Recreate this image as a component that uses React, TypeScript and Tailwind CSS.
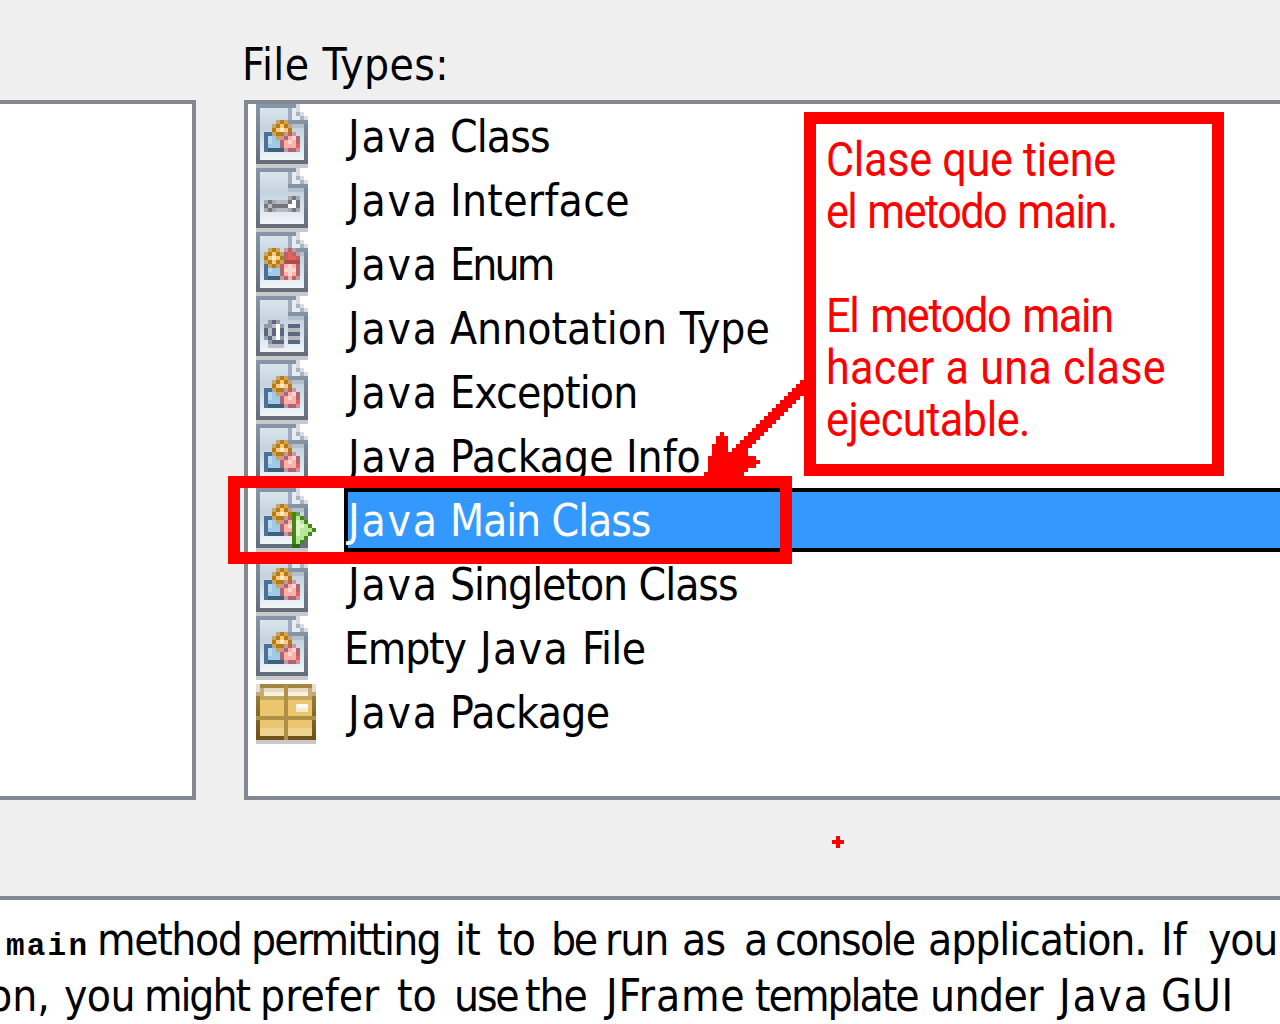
import type { ReactNode } from "react";

const PALETTE: Record<string, string> = {
  o: "#b87c0a", t: "#c8a468", l: "#f3cb85", L: "#fde9c4",
  B: "#4d7192", D: "#3f5f7c", b: "#9dc9ea", c: "#b9d9f0",
  r: "#b5646a", q: "#c79aa2", p: "#fbb1ad", P: "#fdd6d2", R: "#e8615d", M: "#b24a4a",
  g: "#73777b", h: "#a4a9ae", i: "#b4bac0", w: "#ffffff",
  n: "#5c6780", m: "#9199aa", k: "#bcc0c6",
  G: "#3f8a12", H: "#6aa544", e: "#b9e59b", f: "#def5cd", J: "#2f6e0c",
};

function Pixels({ rows, x = 0, y = 0 }: { rows: string[]; x?: number; y?: number }) {
  return (
    <>
      {rows.flatMap((row, j) =>
        row.split("").map((ch, i) =>
          PALETTE[ch] ? <rect key={`${i}-${j}`} x={x + i} y={y + j} width={1} height={1} fill={PALETTE[ch]} /> : null,
        ),
      )}
    </>
  );
}

const CLASS_ROWS = [
  "...tot...",
  "..tolot..",
  "..olLlo..",
  "BBtooqrq.",
  "BcbtqrpPr",
  "BcbbrpPpr",
  "BbbbrpppR",
  "BDDDDqrrq",
];
const INTERFACE_ROWS = ["......hgh", "hghiiigwg", "gkggggwwg", "hghiiihgh"];
const ENUM_ROWS = [
  ".tot.qrq.",
  "tolotrRrq",
  "olLlorRRr",
  "tolotMMMM",
  "BtotrpPpr",
  "BcbbrPPPr",
  "BbbbrpPpr",
  "BDDDqrprq",
];
const ANNOTATION_ROWS = [
  ".mnm.....",
  "mmkwm.nnn",
  "nknwn.iii",
  "nknwn.nnn",
  "mnkwm.iii",
  ".mnnn.nnn",
  ".kkkk....",
];
const RUN_ROWS = ["GH....", "GeG...", "GfeG..", "GffeG.", "GfeeeG", "GfeeG.", "GeeG..", "GeG...", "JJ...."];

type Kind = "class" | "interface" | "enum" | "annotation" | "main" | "package";

function DocumentIcon({ kind }: { kind: Kind }) {
  return (
    <svg className="block h-16 w-[60px]" viewBox="0 0 15 16" shapeRendering="crispEdges">
      <defs>
        <linearGradient id="docEdge" x1="0" y1="0" x2="0" y2="1">
          <stop offset="0" stopColor="#8696a8" />
          <stop offset="1" stopColor="#636e7a" />
        </linearGradient>
        <linearGradient id="docFill" x1="0" y1="0" x2="0" y2="1">
          <stop offset="0" stopColor="#d9e4ed" />
          <stop offset="0.4" stopColor="#c5d3e0" />
          <stop offset="1" stopColor="#f1f5f9" />
        </linearGradient>
      </defs>
      <rect width="13" height="15" fill="url(#docEdge)" />
      <rect x="1" y="1" width="11" height="13" fill="url(#docFill)" />
      <rect x="0" y="15" width="13" height="1" fill="#c9c8ca" />
      <path d="M10 0h3v4h-3z" fill="#ffffff" />
      <path d="M10 0h1v1h-1zM10 1h1v1h-1zM11 2h1v1h-1zM12 3h1v1h-1z" fill="#d8dce2" />
      <path d="M9 1h1v3h-1zM10 3h1v1h-1z" fill="#e6ecf3" />
      <path d="M8 1h1v3h-1z" fill="#9fadbc" />
      <path d="M10 2h1v1h-1zM11 3h1v1h-1z" fill="#aab5c2" />
      <path d="M8 4h5v1h-5z" fill="#8494a5" />
      <path d="M8 5h4v1h-4z" fill="#b3bfcc" />
      <path d="M13 5h1v1h-1z" fill="#f7f7f8" />
      {(kind === "class" || kind === "main") && <Pixels rows={CLASS_ROWS} x={2} y={4} />}
      {kind === "interface" && <Pixels rows={INTERFACE_ROWS} x={2} y={7} />}
      {kind === "enum" && <Pixels rows={ENUM_ROWS} x={2} y={4} />}
      {kind === "annotation" && <Pixels rows={ANNOTATION_ROWS} x={2} y={6} />}
      {kind === "main" && <Pixels rows={RUN_ROWS} x={9} y={6} />}
    </svg>
  );
}

function PackageIcon() {
  return (
    <svg className="block h-16 w-[60px]" viewBox="0 0 15 16" shapeRendering="crispEdges">
      <defs>
        <linearGradient id="boxEdge" x1="0" y1="0" x2="0" y2="1">
          <stop offset="0" stopColor="#a48743" />
          <stop offset="1" stopColor="#6b5119" />
        </linearGradient>
      </defs>
      <rect x="0" y="1" width="15" height="14" fill="url(#boxEdge)" />
      <path d="M0 1h1v2h-1zM14 1h1v2h-1z" fill="#e6dfd0" />
      <path d="M0 3h1v1h-1zM14 3h1v1h-1z" fill="#bba982" />
      <path d="M1 2h13v2h-13z" fill="#c5ad78" />
      <path d="M2 2h5v1h-5zM8 2h5v1h-5z" fill="#e7d9bd" />
      <path d="M2 3h5v1h-5zM8 3h5v1h-5z" fill="#faf1de" />
      <path d="M1 4h13v1h-13z" fill="#c4a75f" />
      <path d="M1 5h13v4h-13z" fill="#ebc66d" />
      <path d="M0 9h15v1h-15z" fill="#ad9144" />
      <path d="M1 10h13v2h-13z" fill="#ebc672" />
      <path d="M1 12h13v2h-13z" fill="#efd391" />
      <path d="M7 1h1v14h-1z" fill="#ae9146" />
      <path d="M10 6h3v1h-3z" fill="#fdf8f0" />
      <path d="M10 7h3v1h-3z" fill="#f5ead0" />
      <path d="M0 15h15v1h-15z" fill="#cac8cb" />
    </svg>
  );
}

type Word = [text: string, style: string];

const JAVA = "inline-block w-[102px] tracking-[1.8px]";

const ITEMS: { kind: Kind; words: Word[] }[] = [
  { kind: "class", words: [["Java ", JAVA], ["Class", "tracking-[-0.9px]"]] },
  { kind: "interface", words: [["Java ", JAVA], ["Interface", "tracking-[0.3px]"]] },
  { kind: "enum", words: [["Java ", JAVA], ["Enum", "tracking-[-2.8px]"]] },
  { kind: "annotation", words: [["Java ", JAVA], ["Annotation Type", "tracking-[0px]"]] },
  { kind: "class", words: [["Java ", JAVA], ["Exception", "tracking-[-0.8px]"]] },
  { kind: "class", words: [["Java ", JAVA], ["Package Info", "tracking-[-0.05px]"]] },
  { kind: "main", words: [["Java ", JAVA], ["Main Class", "tracking-[-1.1px]"]] },
  { kind: "class", words: [["Java ", JAVA], ["Singleton Class", "tracking-[-1.05px]"]] },
  {
    kind: "class",
    words: [
      ["Empty ", "-ml-1 inline-block w-[136px] tracking-[-1.2px]"],
      ["Java ", "inline-block w-[102px] tracking-[1.4px]"],
      ["File", "tracking-[-0.6px]"],
    ],
  },
  { kind: "package", words: [["Java ", JAVA], ["Package", "tracking-[-0.6px]"]] },
];

const DESCRIPTION_FIRST: Word[] = [
  ["method ", "w-[154px] tracking-[-1.4px]"],
  ["permitting ", "w-[204px] tracking-[-1.8px]"],
  ["it ", "w-[42px] tracking-[-0.8px]"],
  ["to ", "w-[54px] tracking-[-0.8px]"],
  ["be ", "w-[54px] tracking-[-2.4px]"],
  ["run ", "w-[77px] tracking-[-1px]"],
  ["as ", "w-[62px] tracking-[-0.8px]"],
  ["a ", "w-[31px]"],
  ["console ", "w-[153px] tracking-[-1.7px]"],
  ["application. ", "w-[233px] tracking-[-1.1px]"],
  ["If ", "w-[47px]"],
  ["you", "tracking-[-1.2px]"],
];

const DESCRIPTION_SECOND: Word[] = [
  ["on, ", "w-[76px]"],
  ["you ", "w-[80px] tracking-[-0.6px]"],
  ["might ", "w-[116px] tracking-[-2.1px]"],
  ["prefer ", "w-[137px]"],
  ["to ", "w-[57px]"],
  ["use ", "w-[71px] tracking-[-2.2px]"],
  ["the ", "w-[81px] tracking-[-1px]"],
  ["JFrame ", "w-[149px] tracking-[0.8px]"],
  ["template ", "w-[175px] tracking-[-2px]"],
  ["under ", "w-[129px] tracking-[-0.6px]"],
  ["Java ", "w-[102px] tracking-[1.8px]"],
  ["GUI", "tracking-[0.4px]"],
];

function Words({ words }: { words: Word[] }) {
  return (
    <>
      {words.map(([text, style], i) => (
        <span key={i} className={`shrink-0 ${style}`}>
          {text}
        </span>
      ))}
    </>
  );
}

function FileTypeRow({ kind, words }: { kind: Kind; words: Word[] }) {
  return (
    <li className="flex h-16">
      <div className="w-24 shrink-0 pl-2">{kind === "package" ? <PackageIcon /> : <DocumentIcon kind={kind} />}</div>
      <div
        className={
          kind === "main"
            ? "flex-1 border-y-4 border-l-4 border-black bg-[#3399ff] pt-px text-white"
            : "flex-1 pl-1 pt-[5px] text-black"
        }
      >
        <Words words={words} />
      </div>
    </li>
  );
}

function NoteLine({ className, children }: { className: string; children?: ReactNode }) {
  return <p className={`h-[52px] origin-left scale-x-[0.88] whitespace-nowrap ${className}`}>{children}</p>;
}

function Arrow() {
  return (
    <svg className="absolute left-[688px] top-[372px] h-[108px] w-[120px]" viewBox="0 0 30 27" shapeRendering="crispEdges" fill="#ff0000">
      {Array.from({ length: 19 }, (_, k) => (
        <rect key={k} x={28 - k} y={k + 2} width={Math.min(k + 2, k < 3 ? 5 : 4)} height={1} />
      ))}
      <path d="M8 15h1v1h-1zM7 16h3v2h-3zM6 18h4v2h-4zM6 20h9v1h-9zM5 21h12v1h-12zM5 22h13v1h-13zM5 23h12v1h-12zM5 24h10v1h-10zM4 25h10v2h-10z" />
    </svg>
  );
}

export default function App() {
  return (
    <div className="relative flex h-[1024px] w-[1280px] flex-col overflow-hidden whitespace-nowrap bg-[#efefef] font-['DejaVu_Sans_Condensed','DejaVu_Sans',sans-serif] text-[44px] leading-[56px] text-black">
      <header className="h-[100px] shrink-0 pl-[242px] pt-[37px]">
        <h1 className="tracking-[0.4px]">File Types:</h1>
      </header>

      <main className="flex h-[700px] shrink-0 gap-12">
        <section className="w-[196px] shrink-0 border-4 border-l-0 border-[#828790] bg-white" />
        <section className="flex-1 border-4 border-r-0 border-[#828790] bg-white">
          <ul className="flex flex-col">
            {ITEMS.map((item, i) => (
              <FileTypeRow key={i} {...item} />
            ))}
          </ul>
        </section>
      </main>

      <footer className="mt-24 h-32 shrink-0 border-t-4 border-[#828790] bg-white pt-3">
        <p className="flex h-14 items-baseline">
          <code className="ml-[6px] w-[91px] shrink-0 font-['Liberation_Mono',monospace] text-[31px] font-bold tracking-[2.2px]">main</code>
          <Words words={DESCRIPTION_FIRST} />
        </p>
        <p className="-ml-3 flex h-14 items-baseline">
          <Words words={DESCRIPTION_SECOND} />
        </p>
      </footer>

      <Arrow />
      <div className="absolute left-[228px] top-[476px] h-[88px] w-[564px] border-[12px] border-[#ff0000]" />
      <aside className="absolute left-[804px] top-[112px] h-[364px] w-[420px] border-[12px] border-[#ff0000] bg-white pl-[10px] pt-[10px] font-['Roboto',sans-serif] text-[49px] leading-[52px] text-[#ff0000]">
        <NoteLine className="tracking-[-0.3px]">Clase que tiene</NoteLine>
        <NoteLine className="tracking-[-1.7px] [word-spacing:2px]">el metodo main.</NoteLine>
        <NoteLine className="" />
        <NoteLine className="tracking-[-1.5px] [word-spacing:3px]">El metodo main</NoteLine>
        <NoteLine className="tracking-[0.3px]">hacer a una clase</NoteLine>
        <NoteLine className="tracking-[-0.5px]">ejecutable.</NoteLine>
      </aside>
      <svg className="absolute left-[832px] top-[836px] size-3" viewBox="0 0 3 3" shapeRendering="crispEdges" fill="#ff0000">
        <path d="M1 0h1v3h-1zM0 1h3v1h-3z" />
      </svg>
    </div>
  );
}
